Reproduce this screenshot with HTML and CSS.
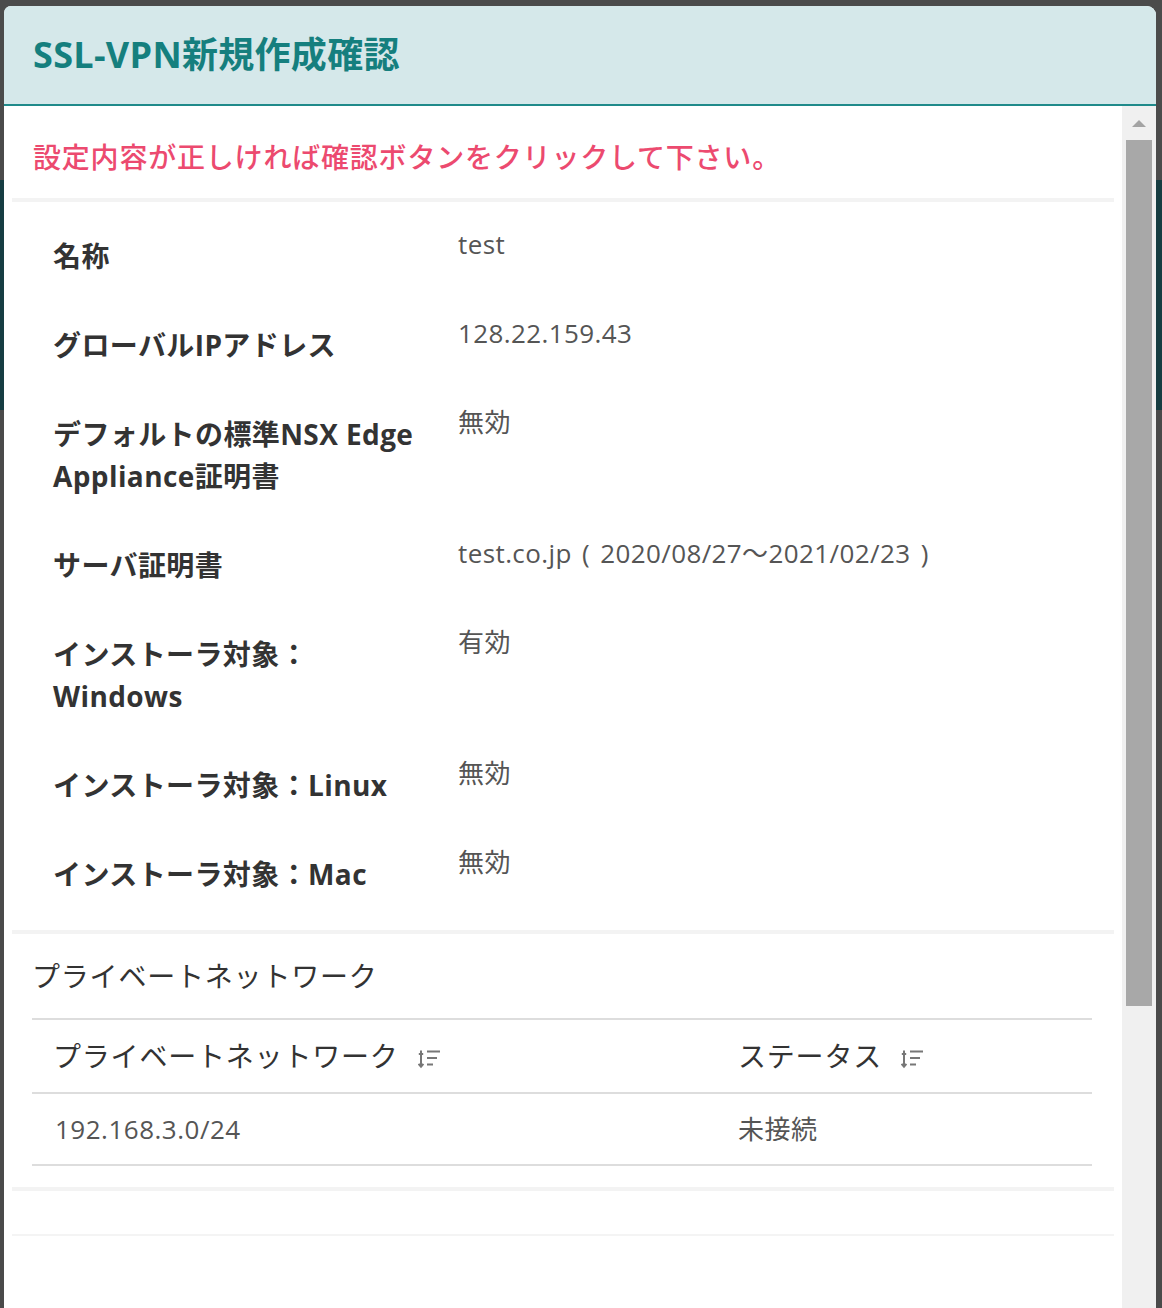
FILE: index.html
```html
<!DOCTYPE html>
<html lang="ja">
<head>
<meta charset="utf-8">
<title>SSL-VPN新規作成確認</title>
<link rel="stylesheet" href="styles.css">
</head>
<body>
<div class="modal">
  <header class="modal-header">
    <h1 class="modal-title">SSL-VPN新規作成確認</h1>
  </header>
  <div class="modal-body">
    <div class="content">
      <p class="notice">設定内容が正しければ確認ボタンをクリックして下さい。</p>
      <dl class="details">
        <div class="row"><dt>名称</dt><dd>test</dd></div>
        <div class="row"><dt>グローバルIPアドレス</dt><dd>128.22.159.43</dd></div>
        <div class="row"><dt>デフォルトの標準NSX Edge<br>Appliance証明書</dt><dd>無効</dd></div>
        <div class="row"><dt>サーバ証明書</dt><dd>test.co.jp ( 2020/08/27～2021/02/23 )</dd></div>
        <div class="row"><dt>インストーラ対象：<br>Windows</dt><dd>有効</dd></div>
        <div class="row"><dt>インストーラ対象：Linux</dt><dd>無効</dd></div>
        <div class="row"><dt>インストーラ対象：Mac</dt><dd>無効</dd></div>
      </dl>
      <section class="network">
        <h2 class="network-title">プライベートネットワーク</h2>
        <table class="net-table">
          <thead>
            <tr>
              <th class="col-net">プライベートネットワーク<svg class="sort" viewBox="0 0 24 20" width="24" height="20"><path d="M3 1.5V18M0.8 5H5.2M0.6 14.8L3 17.6L5.4 14.8M9 2.5H22M9 9H19M9 15.5H15"/></svg></th>
              <th>ステータス<svg class="sort" viewBox="0 0 24 20" width="24" height="20"><path d="M3 1.5V18M0.8 5H5.2M0.6 14.8L3 17.6L5.4 14.8M9 2.5H22M9 9H19M9 15.5H15"/></svg></th>
            </tr>
          </thead>
          <tbody>
            <tr>
              <td>192.168.3.0/24</td>
              <td>未接続</td>
            </tr>
          </tbody>
        </table>
      </section>
      <div class="footer"></div>
    </div>
    <div class="scrollbar">
      <div class="scroll-arrow"></div>
      <div class="scroll-thumb"></div>
    </div>
  </div>
</div>
</body>
</html>
```

FILE: styles.css
```css
html, body {
  margin: 0;
  height: 100%;
}

body {
  overflow: hidden;
  background: linear-gradient(to bottom, #4b4b4b 0, #4b4b4b 180px, #163d42 180px, #163d42 410px, #4a4a4a 410px, #4a4a4a 100%);
  font-family: "Open Sans", "Noto Sans CJK JP", sans-serif;
}

.modal {
  margin: 6px 6px 0 4px;
  height: calc(100vh - 6px);
  background: #ffffff;
  border-radius: 7px 9px 0 0;
  overflow: hidden;
  display: flex;
  flex-direction: column;
}

.modal-header {
  flex: none;
  height: 98px;
  background: #d5e8ea;
  border-bottom: 2px solid #1f8a8a;
  display: flex;
  align-items: center;
  padding-left: 29px;
}

.modal-title {
  margin: 0;
  font-size: 36px;
  line-height: 1;
  font-weight: 700;
  color: #157f7e;
  letter-spacing: 0.3px;
}

.modal-body {
  flex: 1;
  min-height: 0;
  display: flex;
}

.content {
  flex: 1;
  padding: 0 8px;
}

.notice {
  margin: 0;
  padding: 30px 0 20px 21px;
  font-size: 28px;
  line-height: 42px;
  font-weight: 500;
  letter-spacing: 0.8px;
  color: #ec4a6f;
}

.details {
  margin: 0;
  padding: 21px 0 0 41px;
  border-top: 4px solid #f3f3f3;
  border-bottom: 4px solid #f3f3f3;
}

.row {
  display: grid;
  grid-template-columns: 405px 1fr;
}

.row dt {
  padding: 12px 0 35px;
  font-size: 28px;
  line-height: 42px;
  font-weight: 700;
  letter-spacing: 0.4px;
  color: #333333;
}

.row dd {
  margin: 0;
  font-size: 26px;
  line-height: 42px;
  letter-spacing: 0.4px;
  word-spacing: 3px;
  color: #555555;
}

.network {
  padding: 21px 22px 0 20px;
}

.network-title {
  margin: 0;
  font-size: 28px;
  line-height: 42px;
  font-weight: 400;
  letter-spacing: 0.8px;
  color: #333333;
}

.net-table {
  margin-top: 21px;
  width: 100%;
  border-collapse: collapse;
  table-layout: fixed;
}

.net-table th,
.net-table td {
  text-align: left;
  padding: 0 0 0 21px;
  border-top: 2px solid #dddddd;
  border-bottom: 2px solid #dddddd;
}

.net-table th {
  height: 72px;
  font-size: 28px;
  line-height: 42px;
  font-weight: 400;
  letter-spacing: 0.8px;
  color: #333333;
}

.net-table .col-net {
  width: 664px;
}

.net-table td {
  height: 70px;
  font-size: 26px;
  line-height: 42px;
  letter-spacing: 0.5px;
  color: #555555;
}

.net-table td:first-child {
  padding-left: 23px;
}

.sort {
  margin-left: 19px;
  vertical-align: -2px;
  fill: none;
  stroke: #777777;
  stroke-width: 2;
}

.footer {
  margin-top: 21px;
  height: 43px;
  border-top: 4px solid #f3f3f3;
  border-bottom: 2px solid #f4f4f4;
}

.scrollbar {
  flex: none;
  width: 34px;
  background: #f0f0f0;
  display: flex;
  flex-direction: column;
  align-items: center;
}

.scroll-arrow {
  margin-top: 14px;
  width: 0;
  height: 0;
  border-left: 7px solid transparent;
  border-right: 7px solid transparent;
  border-bottom: 7px solid #a3a3a3;
}

.scroll-thumb {
  margin-top: 13px;
  width: 26px;
  height: 866px;
  background: #a8a8a8;
}
```
